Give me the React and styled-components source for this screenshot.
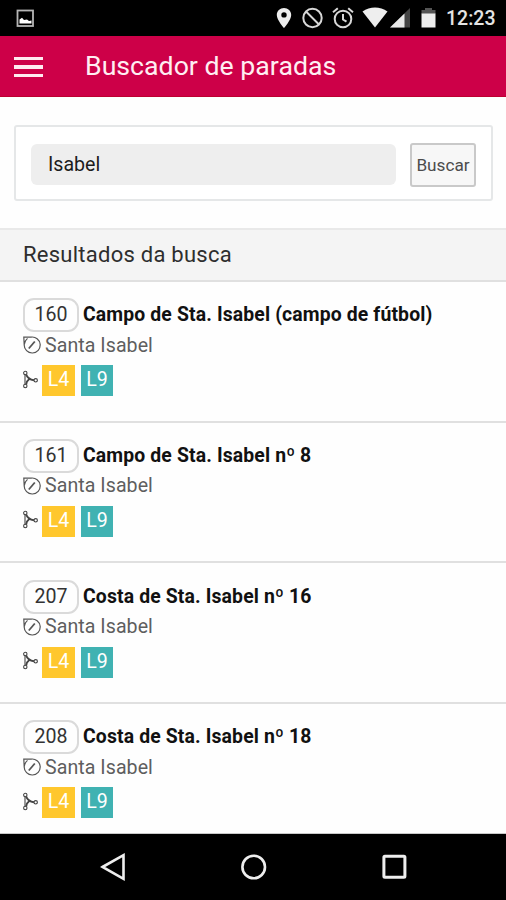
import React from 'react';
import styled, { createGlobalStyle } from 'styled-components';

const GlobalStyle = createGlobalStyle`
  * { box-sizing: border-box; }
  body { margin: 0; background: #fff; font-family: Roboto, "Liberation Sans", sans-serif; }
`;

const Screen = styled.div`
  display: flex;
  flex-direction: column;
  width: 506px;
  height: 900px;
  overflow: hidden;
  background: #fefefe;
`;

const StatusBar = styled.div`
  display: flex;
  flex: none;
  align-items: center;
  justify-content: space-between;
  height: 36px;
  padding: 0 10px 0 16px;
  background: #000;
`;

const StatusGroup = styled.div`
  display: flex;
  align-items: center;
`;

const StatusIcon = styled.svg`
  display: block;
  flex: none;
  margin-right: ${(p) => p.$gap || 0}px;
`;

const Clock = styled.span`
  width: 50px;
  color: #e4e4e4;
  font-size: 19.5px;
  font-weight: 500;
  line-height: 36px;
  padding-top: 2px;
  white-space: nowrap;
`;

const AppBar = styled.header`
  display: flex;
  flex: none;
  align-items: center;
  height: 61px;
  padding-left: 14px;
  background: #cd0048;
  border-bottom: 1px solid #bd0030;
`;

const MenuButton = styled.button`
  display: flex;
  flex-direction: column;
  gap: 5px;
  width: 29px;
  margin-right: 42px;
  padding: 2px 0 0;
  border: 0;
  background: none;
`;

const MenuLine = styled.span`
  height: 3.4px;
  background: #ffeaf0;
`;

const Title = styled.h1`
  margin: 0;
  color: #ffeef2;
  font-size: 26.7px;
  font-weight: 400;
  line-height: 60px;
`;

const SearchCard = styled.form`
  display: flex;
  flex: none;
  align-items: center;
  gap: 14px;
  height: 76px;
  margin: 28px 13px 27px 14px;
  padding: 3px 15px 0;
  border: 2px solid #e5e7e8;
  border-radius: 3px;
  background: #fff;
`;

const SearchInput = styled.input`
  width: 365px;
  height: 41px;
  padding: 0 17px 1px;
  border: 0;
  border-radius: 6px;
  background: #eee;
  color: #1c1c1c;
  font: 400 19.6px Roboto, sans-serif;
`;

const SearchButton = styled.button`
  width: 66px;
  height: 44px;
  padding: 0;
  border: 2px solid #c9c9c9;
  border-radius: 3px;
  background: #f7f7f7;
  color: #4c4c4c;
  font: 400 17.2px Roboto, sans-serif;
`;

const ResultsHeading = styled.h2`
  flex: none;
  height: 52px;
  margin: 0;
  padding-left: 23px;
  border-top: 2px solid #e9e9e9;
  background: #f4f4f4;
  color: #2e2e2e;
  font-size: 22px;
  font-weight: 400;
  line-height: 50px;
  letter-spacing: 0.25px;
`;

const Results = styled.ul`
  flex: 1;
  min-height: 0;
  margin: 0;
  padding: 0;
  overflow: hidden;
  list-style: none;
  border-bottom: 1px solid #c8c8c8;
`;

const Stop = styled.li`
  height: 140.6px;
  padding: 16.4px 0 0 23px;
  border-top: 2px solid #e0e0e0;
`;

const StopHead = styled.div`
  display: flex;
  height: 34px;
  gap: 4px;
`;

const StopCode = styled.span`
  width: 56px;
  height: 34px;
  border: 2px solid #dadada;
  border-radius: 11px;
  color: #333;
  font-size: 19.6px;
  line-height: 29px;
  text-align: center;
`;

const StopName = styled.strong`
  color: #111;
  font-size: 19.4px;
  font-weight: 700;
  line-height: 33px;
  letter-spacing: 0.13px;
  white-space: nowrap;
`;

const Area = styled.div`
  display: flex;
  align-items: center;
  gap: 4px;
  height: 26px;
  color: #5e5e5e;
  font-size: 19.6px;
  font-weight: 400;
  line-height: 26px;
`;

const AreaName = styled.span`
  padding-top: 1px;
  letter-spacing: 0.05px;
`;

const Lines = styled.div`
  display: flex;
  align-items: center;
  height: 31px;
  margin-top: 7px;
`;

const Glyph = styled.svg`
  display: block;
  flex: none;
  margin-right: ${(p) => p.$gap || 0}px;
  margin-bottom: ${(p) => p.$lift || 0}px;
`;

const LineTag = styled.span`
  width: ${(p) => p.$width}px;
  height: 31px;
  margin-right: 6px;
  background: ${(p) => p.$color};
  color: #fff;
  font-size: 19.6px;
  font-weight: 400;
  line-height: 29px;
  text-align: center;
`;

const NavBar = styled.nav`
  display: flex;
  flex: none;
  align-items: center;
  height: 66px;
  padding-left: 100px;
  background: #000;
`;

const NavIcon = styled.svg`
  display: block;
  flex: none;
  margin-right: 115px;
`;

const stops = [
  { code: '160', name: 'Campo de Sta. Isabel (campo de fútbol)' },
  { code: '161', name: 'Campo de Sta. Isabel nº 8' },
  { code: '207', name: 'Costa de Sta. Isabel nº 16' },
  { code: '208', name: 'Costa de Sta. Isabel nº 18' },
];

const PictureIcon = () => (
  <StatusIcon width="19" height="19" viewBox="0 0 19 19">
    <rect x="1.5" y="1.5" width="15.5" height="15.5" fill="none" stroke="#b5b5b5" strokeWidth="1.8" />
    <path d="M3.5 14.5V10.5L6 8.8L8 11L11 10.5L13 12L15.5 11.5V14.5Z" fill="#fff" />
  </StatusIcon>
);

const StatusIcons = () => (
  <>
    <StatusIcon $gap={3} width="16" height="22" viewBox="0 0 16 22">
      <path fillRule="evenodd" d="M8 1C4 1 .8 4 .8 8C.8 13 8 21 8 21S15.200 13 15.200 8C15.200 4 12 1 8 1ZM8 5.200A2.700 2.700 0 1 1 8 10.600A2.700 2.700 0 1 1 8 5.200Z" fill="#ededed" />
    </StatusIcon>
    <StatusIcon $gap={3} width="34" height="22" viewBox="-6 0 34 22">
      <circle cx="11.500" cy="11" r="9.200" fill="none" stroke="#d8d8d8" strokeWidth="2" />
      <path d="M5 4.500L18 17.500" stroke="#d8d8d8" strokeWidth="2" />
    </StatusIcon>
    <StatusIcon $gap={8} width="22" height="22" viewBox="0 0 22 22">
      <g fill="none" stroke="#d8d8d8" strokeWidth="2">
        <circle cx="11" cy="12" r="8.300" />
        <path d="M1 5.300L5.800 1.300M16.200 1.300L21 5.300M11 7V12.500L14.500 14.700" />
      </g>
    </StatusIcon>
    <StatusIcon $gap={2} width="26" height="22" viewBox="0 0 26 22">
      <path d="M.5 4.500C8-.8 18-.8 25.500 4.500L13 20.500Z" fill="#eee" />
    </StatusIcon>
    <StatusIcon $gap={11} width="20" height="22" viewBox="0 0 20 22">
      <path d="M0 20.500L20 1V20.500Z" fill="#444" />
      <path d="M0 20.500L14.500 6.500V20.500Z" fill="#e8e8e8" />
    </StatusIcon>
    <StatusIcon $gap={10} width="15" height="22" viewBox="0 0 15 22">
      <path d="M.5 3H4V1H11V3H14.500V7H.5Z" fill="#555" />
      <path d="M.5 6.500H14.500V20.500H.5Z" fill="#eee" />
    </StatusIcon>
  </>
);

const AreaIcon = () => (
  <Glyph width="18" height="18" viewBox="0 0 18 18">
    <g fill="none" stroke="#555" strokeWidth="1.200">
      <path d="M1.200 8.800L.8 1L8 1.100A8 8 0 1 1 1.200 8.800Q1.400 5 4.500 2.400" />
      <path d="M5.800 12.500L11.800 5.500" strokeWidth="1.800" />
    </g>
  </Glyph>
);

const BranchIcon = () => (
  <Glyph $gap={4} $lift={3} width="15" height="19" viewBox="0 0 15 19">
    <g fill="none" stroke="#444" strokeWidth="1.100">
      <circle cx="2.300" cy="3" r="1.700" />
      <circle cx="2.300" cy="16" r="1.700" />
      <circle cx="12.700" cy="10.300" r="1.700" />
      <path d="M2 4.700V14.300" />
      <path d="M3.200 4.600Q5 9.300 11 10.200M3.200 14.400Q3.500 11 6.300 9" strokeWidth="1.900" />
    </g>
  </Glyph>
);

const StopRow = ({ code, name }) => (
  <Stop>
    <StopHead>
      <StopCode>{code}</StopCode>
      <StopName>{name}</StopName>
    </StopHead>
    <Area>
      <AreaIcon />
      <AreaName>Santa Isabel</AreaName>
    </Area>
    <Lines>
      <BranchIcon />
      <LineTag $width={33} $color="#ffc72d">L4</LineTag>
      <LineTag $width={32} $color="#40b2b2">L9</LineTag>
    </Lines>
  </Stop>
);

export default function App() {
  return (
    <Screen>
      <GlobalStyle />
      <StatusBar>
        <StatusGroup><PictureIcon /></StatusGroup>
        <StatusGroup>
          <StatusIcons />
          <Clock>12:23</Clock>
        </StatusGroup>
      </StatusBar>
      <AppBar>
        <MenuButton aria-label="Menú">
          <MenuLine />
          <MenuLine />
          <MenuLine />
        </MenuButton>
        <Title>Buscador de paradas</Title>
      </AppBar>
      <SearchCard>
        <SearchInput defaultValue="Isabel" />
        <SearchButton type="button">Buscar</SearchButton>
      </SearchCard>
      <ResultsHeading>Resultados da busca</ResultsHeading>
      <Results>
        {stops.map((stop) => <StopRow key={stop.code} {...stop} />)}
      </Results>
      <NavBar>
        <NavIcon width="26" height="28" viewBox="0 0 26 28">
          <path d="M2.500 14L23.500 2.200V25.800Z" fill="none" stroke="#eee" strokeWidth="2.600" />
        </NavIcon>
        <NavIcon width="26" height="28" viewBox="0 0 26 28">
          <circle cx="12.700" cy="14" r="11.300" fill="none" stroke="#eee" strokeWidth="2.600" />
        </NavIcon>
        <NavIcon width="26" height="28" viewBox="0 0 26 28">
          <rect x="1.900" y="3.300" width="21" height="21" rx="1" fill="none" stroke="#eee" strokeWidth="3" />
        </NavIcon>
      </NavBar>
    </Screen>
  );
}
